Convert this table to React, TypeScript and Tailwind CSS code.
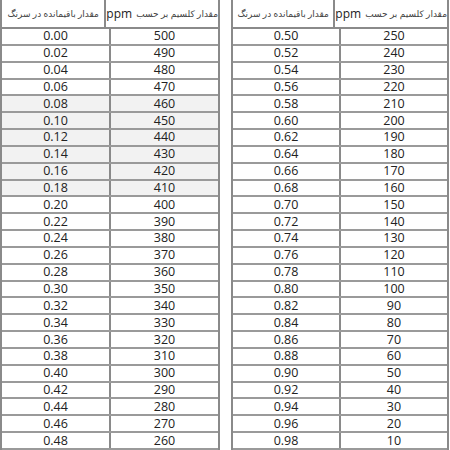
const left = Array.from({ length: 25 }, (_, i) => ({
  r: (i * 0.02).toFixed(2),
  ca: String(500 - i * 10),
  shade: i >= 4 && i <= 9,
}));
const right = Array.from({ length: 25 }, (_, i) => ({
  r: (0.5 + i * 0.02).toFixed(2),
  ca: String(250 - i * 10),
  shade: false,
}));

function Table({ rows }: { rows: { r: string; ca: string; shade: boolean }[] }) {
  return (
    <div className="grid grid-rows-[29px_repeat(25,minmax(0,1fr))] h-[450px] border-l-2 border-r-2 border-[#8a8a8a]">
      <div className="flex border-b-2 border-[#8a8a8a] bg-white">
        <div dir="rtl" className="flex-1 flex items-center justify-center whitespace-nowrap text-[9px] text-[#444] border-r-2 border-[#8a8a8a]" style={{ fontFamily: '"Noto Sans", "DejaVu Sans", sans-serif' }}>
          مقدار باقیمانده در سرنگ
        </div>
        <div dir="rtl" className="flex-1 flex items-center justify-center whitespace-nowrap text-[9px] text-[#444]" style={{ fontFamily: '"Noto Sans", "DejaVu Sans", sans-serif' }}>
          مقدار کلسیم بر حسب <span className="text-[12px] text-[#222] mr-1" style={{ fontFamily: '"Open Sans", sans-serif' }}>ppm</span>
        </div>
      </div>
      {rows.map((row, i) => (
        <div
          key={i}
          className={`flex min-h-0 border-b-2 border-[#9a9a9a] text-[12.5px] leading-[14px] text-[#222] ${row.shade ? "bg-[#f2f2f2]" : "bg-white"}`}
        >
          <div className="flex-1 flex items-center justify-center border-r-2 border-[#8a8a8a]">{row.r}</div>
          <div className="flex-1 flex items-center justify-center">{row.ca}</div>
        </div>
      ))}
    </div>
  );
}

export default function App() {
  return (
    <div className="w-[450px] h-[450px] bg-white flex pr-[1px] gap-[11px]" style={{ fontFamily: '"Open Sans", "Noto Sans", sans-serif' }}>
      <div className="w-[220px]">
        <Table rows={left} />
      </div>
      <div className="w-[218px]">
        <Table rows={right} />
      </div>
    </div>
  );
}
